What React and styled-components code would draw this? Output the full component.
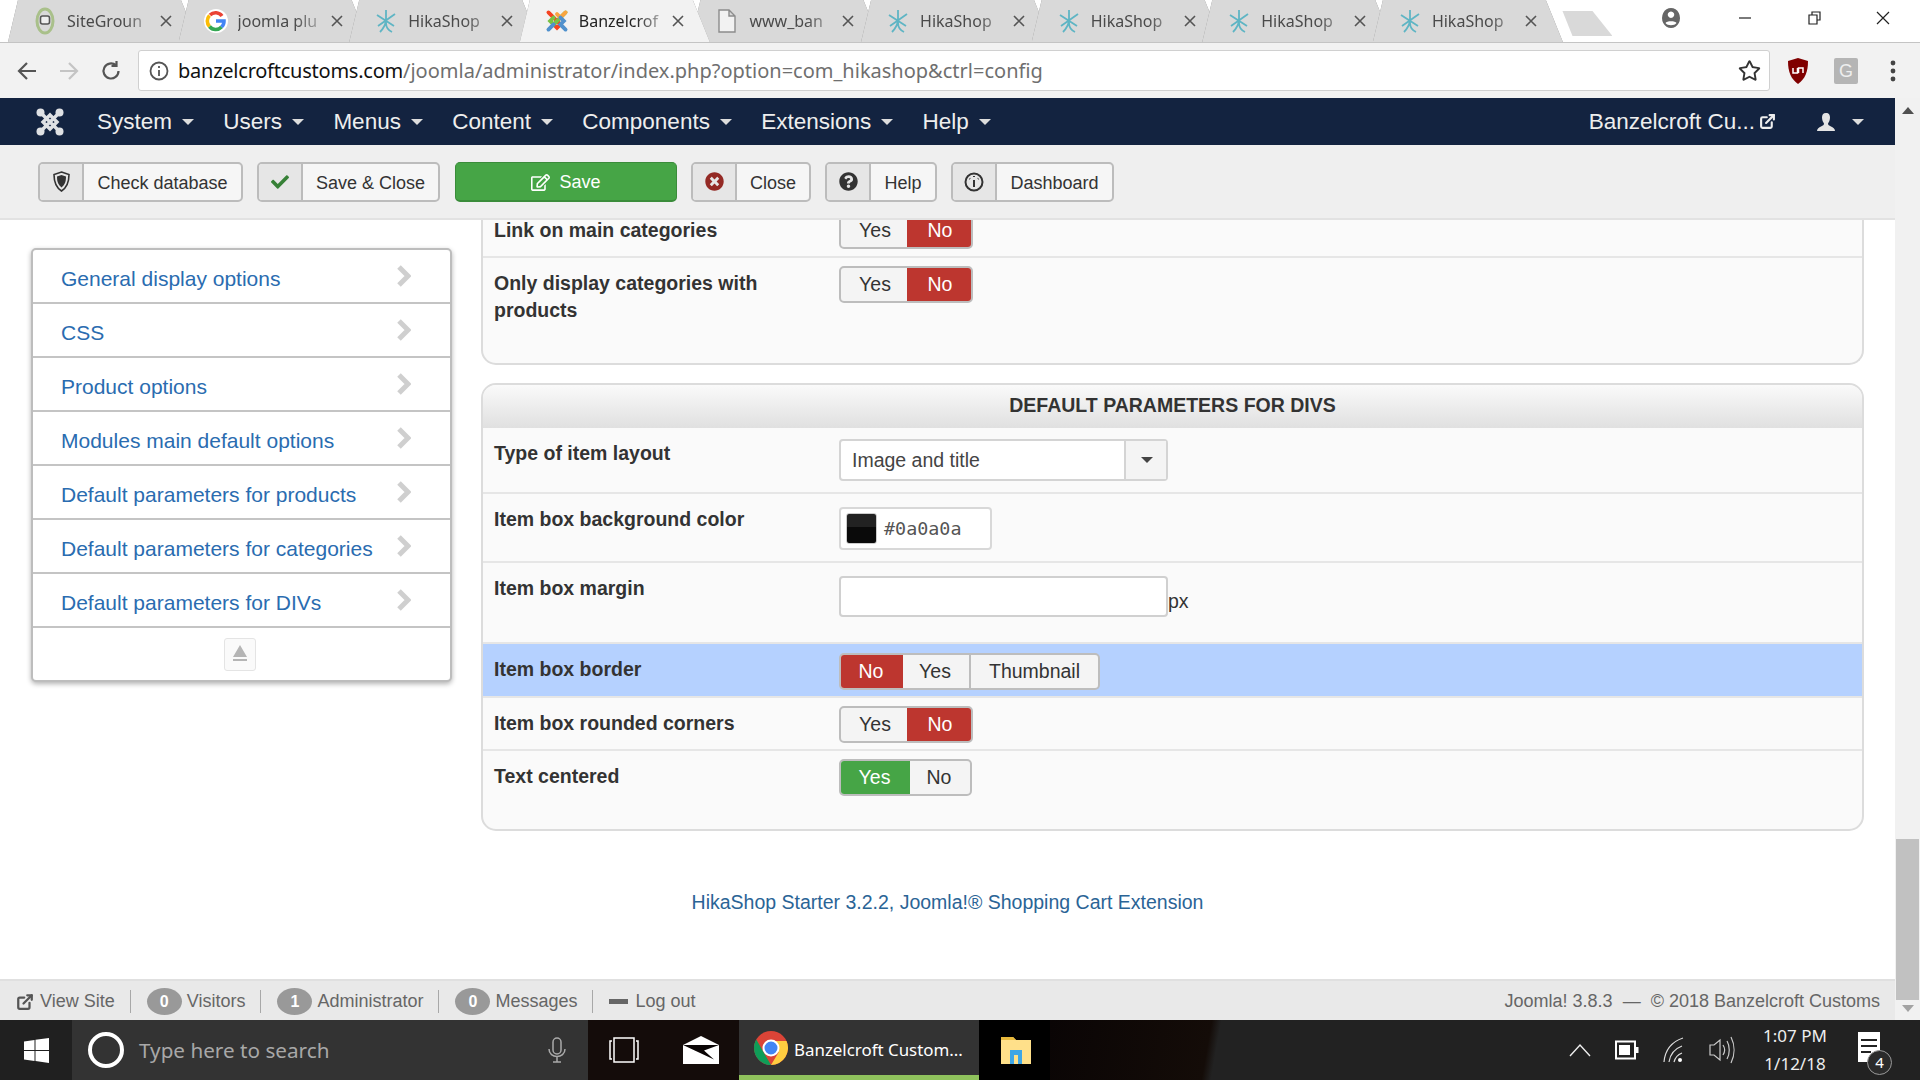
import React from "react";
import styled, { createGlobalStyle } from "styled-components";
import { FaTimesCircle, FaQuestionCircle, FaRegEdit, FaCheck, FaRegStar } from "react-icons/fa";
import { FiExternalLink } from "react-icons/fi";

const GlobalStyle = createGlobalStyle`
    html, body { margin: 0; padding: 0; background: #fff; overflow: hidden; }
    * { box-sizing: border-box; }
    body { font-family: "Liberation Sans", Arial, sans-serif; }
`;

const Screen = styled.div`
    width: 1920px;
    height: 1080px;
    display: flex;
    flex-direction: column;
    overflow: hidden;
`;

/* browser chrome */
const TabStrip = styled.div`
    height: 43px;
    flex: none;
    display: flex;
    align-items: flex-start;
    padding-left: 8px;
    background: #fff;
    border-bottom: 1px solid #c4c4c4;
`;
const TabShell = styled.div`
    width: 190px;
    height: 42px;
    flex: none;
    margin-right: -19.4px;
    position: relative;
    z-index: ${(p) => (p.$active ? 2 : 1)};
    filter: drop-shadow(0 0 0.6px #8a8a8a);
`;
const TabBody = styled.div`
    width: 100%;
    height: 100%;
    display: flex;
    align-items: center;
    padding-left: 25px;
    background: ${(p) => (p.$active ? "#f2f2f2" : "#d9d9d9")};
    clip-path: polygon(0 100%, 10px 0, 173px 0, 100% 100%);
`;
const TabIcon = styled.span`
    width: 24px;
    height: 24px;
    flex: none;
    display: flex;
    align-items: center;
    justify-content: center;
`;
const TabTitle = styled.span`
    width: 81px;
    margin-left: 10px;
    overflow: hidden;
    white-space: nowrap;
    font: 16px "Noto Sans", sans-serif;
    color: ${(p) => (p.$active ? "#222" : "#4a4a4a")};
    -webkit-mask-image: linear-gradient(to right, #000 70%, rgba(0, 0, 0, 0.35) 100%);
    mask-image: linear-gradient(to right, #000 70%, rgba(0, 0, 0, 0.35) 100%);
`;
const TabClose = styled.svg`
    width: 12px;
    height: 12px;
    margin-left: 12px;
    flex: none;
    stroke: #555;
    stroke-width: 1.6;
`;
const NewTab = styled.div`
    width: 50px;
    height: 25px;
    flex: none;
    margin: 11px 0 0 19px;
    background: #d9d9d9;
    clip-path: polygon(0 0, 30px 0, 100% 100%, 10px 100%);
`;
const WindowControls = styled.div`
    flex: 1;
    display: flex;
    align-items: center;
    height: 36px;
    padding-left: 49px;
`;
const WinButton = styled.svg`
    width: 16px;
    height: 16px;
    flex: none;
    margin-left: ${(p) => p.$gap}px;
    stroke: #222;
    fill: none;
    stroke-width: 1.2;
`;

const AddressBar = styled.div`
    height: 55px;
    flex: none;
    display: flex;
    align-items: center;
    background: #f2f2f2;
    padding-left: 16px;
`;
const NavArrow = styled.svg`
    width: 22px;
    height: 22px;
    flex: none;
    margin-right: ${(p) => p.$gap}px;
    fill: none;
    stroke: ${(p) => p.$color};
    stroke-width: 2.2;
`;
const UrlBox = styled.div`
    width: 1632px;
    height: 41px;
    margin-left: -3px;
    background: #fff;
    border: 1px solid #d0d0d0;
    border-radius: 3px;
    display: flex;
    align-items: center;
    padding-left: 10px;
    font: 20px "Noto Sans", sans-serif;
    white-space: nowrap;
`;
const UrlHost = styled.span`
    color: #111;
    margin-left: 9px;
    letter-spacing: -0.24px;
`;
const UrlRest = styled.span`
    color: #6f6f6f;
    flex: 1;
`;
const StarIcon = styled(FaRegStar)`
    width: 23px;
    height: 23px;
    color: #333;
    margin-right: 8px;
`;
const ExtGlyph = styled.div`
    width: 24px;
    height: 30px;
    flex: none;
    margin-left: ${(p) => p.$gap}px;
    display: flex;
    align-items: center;
    justify-content: center;
`;
const GBadge = styled.div`
    width: 24px;
    height: 26px;
    flex: none;
    margin-left: 24px;
    background: #b5b5b5;
    border-radius: 2px;
    color: #eee;
    text-align: center;
    font: 18px/26px "Liberation Sans", sans-serif;
`;

/* page area */
const Viewport = styled.div`
    flex: 1;
    min-height: 0;
    display: flex;
`;
const Page = styled.div`
    width: 1895px;
    display: flex;
    flex-direction: column;
`;
const Scrollbar = styled.div`
    width: 25px;
    display: flex;
    flex-direction: column;
    align-items: center;
    background: #f1f1f1;
    padding-top: 9px;
`;
const ScrollSpacer = styled.div`
    flex: 1;
`;
const ScrollThumb = styled.div`
    width: 23px;
    height: 161px;
    background: #c1c1c1;
    margin-bottom: 5px;
`;
const ScrollArrow = styled.div`
    width: 0;
    height: 0;
    border-left: 6px solid transparent;
    border-right: 6px solid transparent;
    ${(p) => (p.$down ? "border-top: 7px solid #a3a3a3; margin-bottom: 8px;" : "border-bottom: 7px solid #505050;")}
`;

const Navbar = styled.div`
    height: 47px;
    flex: none;
    background: #132340;
    display: flex;
    align-items: center;
    padding-left: 36px;
    color: #eee;
    font-size: 22.5px;
`;
const NavLogo = styled.svg`
    width: 28px;
    height: 28px;
    margin-right: 33px;
    flex: none;
`;
const NavItem = styled.div`
    display: flex;
    align-items: center;
    margin-right: 29.3px;
`;
const Caret = styled.span`
    width: 0;
    height: 0;
    margin-left: ${(p) => p.$gap || 10}px;
    border-left: 6px solid transparent;
    border-right: 6px solid transparent;
    border-top: 6px solid ${(p) => p.$color || "#ddd"};
`;
const NavRight = styled.div`
    margin-left: auto;
    display: flex;
    align-items: center;
    padding-right: 31px;
`;
const UserGlyph = styled.svg`
    width: 18px;
    height: 18px;
    margin-left: 41px;
    fill: #e4e4e4;
`;
const LinkIcon = styled(FiExternalLink)`
    width: 17px;
    height: 17px;
    margin-left: 4px;
    stroke-width: 3;
`;

const Subhead = styled.div`
    height: 75px;
    flex: none;
    display: flex;
    align-items: center;
    gap: 14px;
    padding-left: 38px;
    background: #efefef;
    border-bottom: 2px solid #e2e2e2;
`;
const ToolButton = styled.div`
    height: 40px;
    width: ${(p) => p.$w}px;
    display: flex;
    align-items: stretch;
    background: #f6f6f6;
    border: 2px solid #bcbcbc;
    border-radius: 5px;
    font-size: 18px;
    color: #333;
    overflow: hidden;
`;
const ToolIcon = styled.span`
    width: ${(p) => p.$w}px;
    flex: none;
    display: flex;
    align-items: center;
    justify-content: center;
    background: #e6e6e6;
    border-right: 2px solid #bcbcbc;
`;
const ToolLabel = styled.span`
    flex: 1;
    display: flex;
    align-items: center;
    justify-content: center;
    padding-top: 3px;
`;
const SaveButton = styled.div`
    width: 222px;
    height: 40px;
    margin-left: 1px;
    display: flex;
    align-items: center;
    justify-content: center;
    gap: 9px;
    padding-top: 2px;
    background: #46a546;
    border: 1px solid #3a8c3a;
    border-bottom-width: 2px;
    border-radius: 5px;
    color: #fff;
    font-size: 18px;
`;

const Main = styled.div`
    flex: 1;
    min-height: 0;
    display: flex;
    flex-direction: column;
    background: #fff;
`;
const Columns = styled.div`
    display: flex;
    align-items: flex-start;
    padding-left: 31px;
`;
const SideMenu = styled.div`
    width: 421px;
    margin-top: 28px;
    flex: none;
    background: #fff;
    border: 2px solid #bdbdbd;
    border-radius: 5px;
    box-shadow: 0 2px 5px rgba(0, 0, 0, 0.3);
`;
const SideItem = styled.div`
    height: 54px;
    display: flex;
    align-items: center;
    justify-content: space-between;
    padding: 5px 39px 0 28px;
    border-bottom: 2px solid #c4c4c4;
    color: #2a6cb0;
    font-size: 21px;
`;
const SideChevron = styled.svg`
    width: 14px;
    height: 22px;
    margin-top: -5px;
    fill: none;
    stroke: #cfcfcf;
    stroke-width: 5;
`;
const SideFoot = styled.div`
    height: 52px;
    display: flex;
    align-items: center;
    justify-content: center;
    padding-right: 4px;
`;
const CollapseButton = styled.div`
    width: 32px;
    height: 33px;
    display: flex;
    align-items: center;
    justify-content: center;
    background: #fafafa;
    border: 1px solid #e4e4e4;
    border-radius: 3px;
`;

const Panels = styled.div`
    width: 1383px;
    margin-left: 29px;
    flex: none;
    display: flex;
    flex-direction: column;
    gap: 18px;
`;
const Panel = styled.div`
    background: #fafafa;
    border: 2px solid #dcdcdc;
    border-top-width: ${(p) => (p.$cut ? 0 : 2)}px;
    border-radius: ${(p) => (p.$cut ? "0 0 15px 15px" : "15px")};
    overflow: hidden;
`;
const PanelHead = styled.div`
    height: 43px;
    line-height: 41px;
    text-align: center;
    font-weight: 700;
    font-size: 19.5px;
    color: #333;
    background: linear-gradient(#fafafa, #e0e0e0);
`;
const Row = styled.div`
    height: ${(p) => p.$h}px;
    display: grid;
    grid-template-columns: 345px 1fr;
    padding-left: 11px;
    overflow: hidden;
    background: ${(p) => (p.$hl ? "#b5d1ff" : "transparent")};
    border-bottom: ${(p) => (p.$last ? "none" : "2px solid #e6e6e6")};
`;
const Label = styled.div`
    width: 320px;
    margin-top: ${(p) => (p.$top === undefined ? 12 : p.$top)}px;
    font-weight: 700;
    font-size: 19.5px;
    line-height: 27px;
    color: #333;
`;
const Control = styled.div`
    display: flex;
    align-items: flex-start;
    margin-top: ${(p) => p.$top}px;
`;
const Toggle = styled.div`
    display: flex;
    height: 37px;
    border-radius: 5px;
    overflow: hidden;
    background: #f4f4f4;
    border: 2px solid #bdbdbd;
    font-size: 19.5px;
`;
const ToggleOpt = styled.span`
    width: ${(p) => p.$w}px;
    margin: ${(p) => (p.$on ? "-2px" : 0)} ${(p) => (p.$on ? "-2px" : 0)};
    display: flex;
    align-items: center;
    justify-content: center;
    background: ${(p) => (p.$on === "red" ? "#bd362f" : p.$on === "green" ? "#46a546" : "transparent")};
    color: ${(p) => (p.$on ? "#fff" : "#333")};
    border-right: ${(p) => (p.$sep ? "2px solid #bdbdbd" : "none")};
`;
const SelectBox = styled.div`
    width: 329px;
    height: 42px;
    display: flex;
    background: #fff;
    border: 2px solid #d4d4d4;
    border-radius: 4px;
    font-size: 19.5px;
    color: #444;
`;
const SelectValue = styled.span`
    flex: 1;
    padding-left: 11px;
    line-height: 38px;
`;
const SelectArrow = styled.span`
    width: 42px;
    display: flex;
    align-items: center;
    justify-content: center;
    background: #f4f4f4;
    border-left: 2px solid #d4d4d4;
`;
const ColorField = styled.div`
    width: 153px;
    height: 43px;
    display: flex;
    align-items: center;
    gap: 7px;
    padding-left: 5px;
    background: #fff;
    border: 2px solid #d8d8d8;
    border-radius: 4px;
    font: 18.4px "DejaVu Sans Mono", monospace;
    color: #555;
`;
const Swatch = styled.span`
    width: 31px;
    height: 31px;
    border-radius: 3px;
    border: 1px solid #ccc;
    background: linear-gradient(#222 0 45%, #0a0a0a 45%);
`;
const TextInput = styled.div`
    width: 329px;
    height: 41px;
    background: #fff;
    border: 2px solid #d0d0d0;
    border-radius: 4px;
`;
const Unit = styled.span`
    font-size: 19.5px;
    color: #333;
    margin-top: 14px;
`;
const FooterLink = styled.div`
    margin-top: 60px;
    text-align: center;
    font-size: 19.5px;
    color: #2a6496;
`;

const StatusBar = styled.div`
    height: 41px;
    flex: none;
    display: flex;
    align-items: center;
    padding: 2px 15px 0 16px;
    background: #e9e9e9;
    border-top: 2px solid #e0e0e0;
    color: #666;
    font-size: 18px;
`;
const StatusSep = styled.span`
    width: 1px;
    height: 23px;
    margin: 0 16px 0 15px;
    background: #a8a8a8;
`;
const Badge = styled.span`
    width: 35px;
    height: 27px;
    margin-right: 5px;
    border-radius: 50%;
    background: #999;
    color: #fff;
    font-weight: 700;
    font-size: 16px;
    display: flex;
    align-items: center;
    justify-content: center;
`;
const StatusLink = styled(FiExternalLink)`
    width: 18px;
    height: 18px;
    margin-right: 6px;
    color: #555;
    stroke-width: 3;
`;
const LogoutDash = styled.span`
    width: 19px;
    height: 5px;
    margin-right: 7px;
    background: #666;
`;
const StatusRight = styled.span`
    margin-left: auto;
    margin-top: -1px;
`;

/* windows taskbar */
const Taskbar = styled.div`
    height: 60px;
    flex: none;
    display: flex;
    background: #222;
    color: #fff;
    font-family: "Noto Sans", sans-serif;
`;
const StartCell = styled.div`
    width: 72px;
    display: flex;
    align-items: center;
    justify-content: center;
    background: #202020;
`;
const SearchCell = styled.div`
    width: 516px;
    display: flex;
    align-items: center;
    padding-left: 14px;
    background: #333;
    font-size: 20.7px;
    color: #a8a8a8;
`;
const SearchText = styled.span`
    flex: 1;
    margin-left: 13px;
`;
const TaskIcons = styled.div`
    width: 151px;
    display: flex;
    align-items: center;
    gap: 44px;
    padding-left: 21px;
    background: #140c0a;
`;
const ChromeCell = styled.div`
    width: 240px;
    display: flex;
    align-items: center;
    gap: 6px;
    padding-left: 15px;
    background: #333;
    border-bottom: 5px solid #8fc25c;
    font-size: 16.9px;
    white-space: nowrap;
`;
const ChromeLabel = styled.span`
    margin-top: 3px;
`;
const FolderCell = styled.div`
    width: 71px;
    display: flex;
    align-items: center;
    padding-left: 21px;
    background: #000;
`;
const Wallpaper = styled.div`
    width: 180px;
    background: linear-gradient(100deg, #0a0505 0%, #140c08 85%, #222 90%);
`;
const Tray = styled.div`
    flex: 1;
    display: flex;
    align-items: center;
    padding-left: 339px;
    gap: 24px;
`;
const Clock = styled.div`
    width: 72px;
    white-space: nowrap;
    font-size: 17px;
    line-height: 28px;
    text-align: center;
    color: #eee;
`;
const NotifyWrap = styled.div`
    position: relative;
    width: 22px;
    height: 30px;
    margin-left: 3px;
    margin-top: -6px;
`;
const NotifyBadge = styled.span`
    position: absolute;
    right: -12px;
    bottom: -13px;
    width: 25px;
    height: 25px;
    border-radius: 50%;
    background: #2b2b2b;
    border: 1px solid #999;
    font-size: 15px;
    text-align: center;
    line-height: 23px;
`;

/* little drawings */
const HikaIcon = () => (
    <svg width="22" height="24" viewBox="0 0 22 24" fill="none" stroke="#5fb5c4" strokeWidth="1.8">
        <path d="M11 1v13c0 4 2 7 6 9M2 6l17 11M20 5L3 17M11 12c-1 5-3 8-6 11" />
    </svg>
);
const GoogleIcon = () => (
    <svg width="24" height="24" viewBox="0 0 24 24" fill="none" strokeWidth="3.6">
        <circle cx="12" cy="12" r="12" fill="#fff" />
        <path d="M18 7a8 8 0 0 0-12-1" stroke="#ea4335" />
        <path d="M5.5 6.5a8 8 0 0 0 0 11" stroke="#fbbc05" />
        <path d="M5.5 17.5a8 8 0 0 0 12 .5" stroke="#34a853" />
        <path d="M17.5 18a8 8 0 0 0 2.5-6h-8" stroke="#4285f4" />
    </svg>
);
const SiteIcon = () => (
    <svg width="20" height="28" viewBox="0 0 20 28" fill="none">
        <ellipse cx="10" cy="14" rx="8" ry="12" stroke="#a9c08a" strokeWidth="3" />
        <rect x="5.5" y="9" width="9" height="8" rx="2" fill="#eee" stroke="#555" strokeWidth="1.6" />
    </svg>
);
const JoomlaColorIcon = () => (
    <svg width="26" height="26" viewBox="0 0 28 28" fill="none" strokeWidth="4.5" strokeLinecap="round">
        <path d="M4 4L18 18l-4 4-4-4" stroke="#f44321" />
        <path d="M24 4L10 18l-4-4 4-4" stroke="#7ac143" />
        <path d="M4 24l6-6" stroke="#5091cd" />
        <path d="M14 6l4 4 6-6" stroke="#f9a541" />
        <path d="M24 24l-6-6 4-4-4-4" stroke="#5091cd" />
    </svg>
);
const JoomlaLogo = () => (
    <NavLogo viewBox="0 0 28 28" fill="none" stroke="#dfe1e4" strokeWidth="3.4" strokeLinecap="round">
        <path d="M5 5l18 18M23 5L5 23M14 7l7 7-7 7-7-7z" />
        <g fill="#dfe1e4" stroke="none">
            <circle cx="4.5" cy="4.5" r="4" /><circle cx="23.5" cy="4.5" r="4" />
            <circle cx="4.5" cy="23.500" r="4" /><circle cx="23.500" cy="23.500" r="4" />
        </g>
    </NavLogo>
);
const FileIcon = () => (
    <svg width="18" height="24" viewBox="0 0 18 24" fill="#f2f2f2" stroke="#8c8c8c" strokeWidth="1.4">
        <path d="M1 1h10l6 6v16H1zM11 1v6h6" />
    </svg>
);
const ShieldIcon = () => (
    <svg width="17" height="21" viewBox="0 0 17 21">
        <path d="M8.5 1L16 3.5c0 8-2 13-7.5 16.500C3 16.500 1 11.500 1 3.500z" fill="none" stroke="#333" strokeWidth="1.600" />
        <path d="M8.500 4l4.500 1.500c0 5-1 8-4.500 11-3.500-3-4.500-6-4.500-11z" fill="#333" />
    </svg>
);
const DashIcon = () => (
    <svg width="20" height="22" viewBox="0 0 20 22" fill="none" stroke="#333" strokeWidth="2">
        <circle cx="10" cy="11" r="8.500" />
        <path d="M10 9v7M5.500 7.500l.5.500M14.500 7.500l-.5.500M10 5v1" />
    </svg>
);

const tabs = [
    { title: "SiteGroun", icon: <SiteIcon /> },
    { title: "joomla plu", icon: <GoogleIcon /> },
    { title: "HikaShop", icon: <HikaIcon /> },
    { title: "Banzelcrof", icon: <JoomlaColorIcon />, active: true },
    { title: "www_ban", icon: <FileIcon /> },
    { title: "HikaShop", icon: <HikaIcon /> },
    { title: "HikaShop", icon: <HikaIcon /> },
    { title: "HikaShop", icon: <HikaIcon /> },
    { title: "HikaShop", icon: <HikaIcon /> },
];
const menus = ["System", "Users", "Menus", "Content", "Components", "Extensions", "Help"];
const sideItems = [
    "General display options",
    "CSS",
    "Product options",
    "Modules main default options",
    "Default parameters for products",
    "Default parameters for categories",
    "Default parameters for DIVs",
];

function YesNo({ value }) {
    return (
        <Toggle>
            <ToggleOpt $w={value === "yes" ? 71 : 68} $on={value === "yes" ? "green" : undefined}>Yes</ToggleOpt>
            <ToggleOpt $w={value === "no" ? 66 : 62} $on={value === "no" ? "red" : undefined}>No</ToggleOpt>
        </Toggle>
    );
}

export default function App() {
    return (
        <Screen>
            <GlobalStyle />
            <TabStrip>
                {tabs.map((tab, i) => (
                    <TabShell key={i} $active={tab.active}>
                        <TabBody $active={tab.active}>
                            <TabIcon>{tab.icon}</TabIcon>
                            <TabTitle $active={tab.active}>{tab.title}</TabTitle>
                            <TabClose viewBox="0 0 12 12"><path d="M1 1l10 10M11 1L1 11" /></TabClose>
                        </TabBody>
                    </TabShell>
                ))}
                <NewTab />
                <WindowControls>
                    <svg width="20" height="22" viewBox="0 0 20 22" fill="#666">
                        <path d="M10 1a9 10 0 1 0 .01 0zM10 4.500a3.200 3.200 0 1 1-.01 0zM4.500 16c1-2.500 10-2.500 11 0-2 3-9 3-11 0z" fillRule="evenodd" />
                    </svg>
                    <WinButton $gap={56} viewBox="0 0 16 16"><path d="M2 8h12" /></WinButton>
                    <WinButton $gap={53} viewBox="0 0 16 16"><path d="M3 5h8v9H3zM6 5V2h8v8h-3" /></WinButton>
                    <WinButton $gap={53} viewBox="0 0 16 16"><path d="M2 2l12 12M14 2L2 14" /></WinButton>
                </WindowControls>
            </TabStrip>

            <AddressBar>
                <NavArrow $gap={20} $color="#555" viewBox="0 0 22 22"><path d="M20 11H3M11 3l-8 8 8 8" /></NavArrow>
                <NavArrow $gap={20} $color="#c4c4c4" viewBox="0 0 22 22"><path d="M2 11h17M11 3l8 8-8 8" /></NavArrow>
                <NavArrow $gap={19} $color="#555" viewBox="0 0 22 22"><path d="M18.500 11a7.500 7.500 0 1 1-2.500-5.600M16.500 1v5h-5" /></NavArrow>
                <UrlBox>
                    <svg width="20" height="20" viewBox="0 0 20 20" fill="none" stroke="#555" strokeWidth="1.800">
                        <circle cx="10" cy="10" r="8.500" />
                        <path d="M10 9v6M10 5v2" />
                    </svg>
                    <UrlHost>banzelcroftcustoms.com</UrlHost>
                    <UrlRest>/joomla/administrator/index.php?option=com_hikashop&amp;ctrl=config</UrlRest>
                    <StarIcon />
                </UrlBox>
                <ExtGlyph $gap={16}>
                    <svg width="22" height="28" viewBox="0 0 22 28">
                        <path d="M11 1l10 3c0 11-3 18-10 23C4 22 1 15 1 4z" fill="#800000" />
                        <path d="M6 11v5h4.500v-5M11.500 16v-5H16v5" fill="none" stroke="#fff" strokeWidth="1.500" />
                    </svg>
                </ExtGlyph>
                <GBadge>G</GBadge>
                <ExtGlyph $gap={23}>
                    <svg width="6" height="24" viewBox="0 0 6 24" fill="#444">
                        <circle cx="3" cy="4" r="2.400" /><circle cx="3" cy="12" r="2.400" /><circle cx="3" cy="20" r="2.400" />
                    </svg>
                </ExtGlyph>
            </AddressBar>

            <Viewport>
                <Page>
                    <Navbar>
                        <JoomlaLogo />
                        {menus.map((m) => (
                            <NavItem key={m}>{m}<Caret /></NavItem>
                        ))}
                        <NavRight>
                            Banzelcroft Cu...
                            <LinkIcon />
                            <UserGlyph viewBox="0 0 18 18">
                                <path d="M9 0c3 0 4 2 4 4.500S12 9 11 10.500c0 1.500 1 2 3 3s4 2 4 4.500H0c0-2.500 2-3.500 4-4.500s3-1.500 3-3C6 9 5 7 5 4.500S6 0 9 0z" />
                            </UserGlyph>
                            <Caret $gap={17} />
                        </NavRight>
                    </Navbar>

                    <Subhead>
                        <ToolButton $w={205}>
                            <ToolIcon $w={44}><ShieldIcon /></ToolIcon>
                            <ToolLabel>Check database</ToolLabel>
                        </ToolButton>
                        <ToolButton $w={183}>
                            <ToolIcon $w={44}><FaCheck color="#378137" size={18} /></ToolIcon>
                            <ToolLabel>Save &amp; Close</ToolLabel>
                        </ToolButton>
                        <SaveButton><FaRegEdit size={19} />Save</SaveButton>
                        <ToolButton $w={120}>
                            <ToolIcon $w={44}><FaTimesCircle color="#942a25" size={19} /></ToolIcon>
                            <ToolLabel>Close</ToolLabel>
                        </ToolButton>
                        <ToolButton $w={112}>
                            <ToolIcon $w={44}><FaQuestionCircle color="#333" size={19} /></ToolIcon>
                            <ToolLabel>Help</ToolLabel>
                        </ToolButton>
                        <ToolButton $w={163}>
                            <ToolIcon $w={44}><DashIcon /></ToolIcon>
                            <ToolLabel>Dashboard</ToolLabel>
                        </ToolButton>
                    </Subhead>

                    <Main>
                        <Columns>
                            <SideMenu>
                                {sideItems.map((item) => (
                                    <SideItem key={item}>
                                        {item}
                                        <SideChevron viewBox="0 0 14 22"><path d="M2 2l9 9-9 9" /></SideChevron>
                                    </SideItem>
                                ))}
                                <SideFoot>
                                    <CollapseButton>
                                        <svg width="16" height="20" viewBox="0 0 16 20" fill="#b5b5b5">
                                            <path d="M8 1l7 12H1zM1 15h14v2H1z" />
                                        </svg>
                                    </CollapseButton>
                                </SideFoot>
                            </SideMenu>
                            <Panels>
                                <Panel $cut>
                                    <Row $h={38}>
                                        <Label $top={-3}>Link on main categories</Label>
                                        <Control $top={-8}><YesNo value="no" /></Control>
                                    </Row>
                                    <Row $h={105} $last>
                                        <Label>Only display categories with products</Label>
                                        <Control $top={8}><YesNo value="no" /></Control>
                                    </Row>
                                </Panel>
                                <Panel>
                                    <PanelHead>DEFAULT PARAMETERS FOR DIVS</PanelHead>
                                    <Row $h={66}>
                                        <Label>Type of item layout</Label>
                                        <Control $top={11}>
                                            <SelectBox>
                                                <SelectValue>Image and title</SelectValue>
                                                <SelectArrow><Caret $gap={1} $color="#444" /></SelectArrow>
                                            </SelectBox>
                                        </Control>
                                    </Row>
                                    <Row $h={69}>
                                        <Label>Item box background color</Label>
                                        <Control $top={13}>
                                            <ColorField><Swatch />#0a0a0a</ColorField>
                                        </Control>
                                    </Row>
                                    <Row $h={81}>
                                        <Label>Item box margin</Label>
                                        <Control $top={13}>
                                            <TextInput />
                                            <Unit>px</Unit>
                                        </Control>
                                    </Row>
                                    <Row $h={54} $hl>
                                        <Label>Item box border</Label>
                                        <Control $top={9}>
                                            <Toggle>
                                                <ToggleOpt $w={64} $on="red">No</ToggleOpt>
                                                <ToggleOpt $w={70} $sep>Yes</ToggleOpt>
                                                <ToggleOpt $w={127}>Thumbnail</ToggleOpt>
                                            </Toggle>
                                        </Control>
                                    </Row>
                                    <Row $h={53}>
                                        <Label>Item box rounded corners</Label>
                                        <Control $top={8}><YesNo value="no" /></Control>
                                    </Row>
                                    <Row $h={78} $last>
                                        <Label>Text centered</Label>
                                        <Control $top={8}><YesNo value="yes" /></Control>
                                    </Row>
                                </Panel>
                            </Panels>
                        </Columns>
                        <FooterLink>HikaShop Starter 3.2.2, Joomla!® Shopping Cart Extension</FooterLink>
                    </Main>

                    <StatusBar>
                        <StatusLink />
                        View Site
                        <StatusSep />
                        <Badge>0</Badge>Visitors
                        <StatusSep />
                        <Badge>1</Badge>Administrator
                        <StatusSep />
                        <Badge>0</Badge>Messages
                        <StatusSep />
                        <LogoutDash />Log out
                        <StatusRight>Joomla! 3.8.3 &nbsp;—&nbsp; © 2018 Banzelcroft Customs</StatusRight>
                    </StatusBar>
                </Page>
                <Scrollbar>
                    <ScrollArrow />
                    <ScrollSpacer />
                    <ScrollThumb />
                    <ScrollArrow $down />
                </Scrollbar>
            </Viewport>

            <Taskbar>
                <StartCell>
                    <svg width="25" height="25" viewBox="0 0 25 25" fill="#fff">
                        <path d="M0 3.500l10.500-1.500v10H0zM11.500 1.800L25 0v12H11.500zM0 13h10.500v10L0 21.500zM11.500 13H25v12l-13.500-2z" />
                    </svg>
                </StartCell>
                <SearchCell>
                    <svg width="40" height="40" viewBox="0 0 40 40" fill="none" stroke="#fff" strokeWidth="4">
                        <circle cx="20" cy="20" r="16" />
                    </svg>
                    <SearchText>Type here to search</SearchText>
                    <svg width="18" height="26" viewBox="0 0 18 26" fill="none" stroke="#aaa" strokeWidth="1.500" style={{ marginRight: 22 }}>
                        <rect x="5" y="1" width="8" height="16" rx="4" />
                        <path d="M1 12c0 10 16 10 16 0M9 20v5M5 25h8" />
                    </svg>
                </SearchCell>
                <TaskIcons>
                    <svg width="30" height="26" viewBox="0 0 30 26" fill="none" stroke="#fff" strokeWidth="1.500">
                        <rect x="5" y="1" width="20" height="24" />
                        <path d="M3 4H1v18h2M27 4h2v18h-2" />
                    </svg>
                    <svg width="36" height="30" viewBox="0 0 36 30">
                        <path d="M0 10L18 1l18 9v19H0z" fill="#fff" />
                        <path d="M0 10h36L21 15.500l10 9z" fill="#0a0505" />
                    </svg>
                </TaskIcons>
                <ChromeCell>
                    <svg width="34" height="34" viewBox="0 0 34 34">
                        <circle cx="17" cy="17" r="17" fill="#db4437" />
                        <path d="M2.300 8.500L10 22l7 12C7.600 34 0 26.400 0 17c0-3 .8-6 2.300-8.500z" fill="#0f9d58" />
                        <path d="M17 10h15.500A17 17 0 0 1 17 34l7.500-12.500z" fill="#ffcd40" />
                        <circle cx="17" cy="17" r="7.500" fill="#4285f4" stroke="#fff" strokeWidth="2" />
                    </svg>
                    <ChromeLabel>Banzelcroft Custom...</ChromeLabel>
                </ChromeCell>
                <FolderCell>
                    <svg width="32" height="30" viewBox="0 0 32 30">
                        <path d="M1 2h12l3 3h15v24H1z" fill="#ffe08a" />
                        <path d="M1 2h12l3 3H1z" fill="#e8b93c" />
                        <path d="M10 29V15h12v14h-4v-9h-4v9z" fill="#3ea6e6" />
                    </svg>
                </FolderCell>
                <Wallpaper />
                <Tray>
                    <svg width="22" height="14" viewBox="0 0 22 14" fill="none" stroke="#eee" strokeWidth="1.400">
                        <path d="M1 13L11 2l10 11" />
                    </svg>
                    <svg width="24" height="20" viewBox="0 0 24 20">
                        <rect x="1" y="1.500" width="19" height="17" fill="none" stroke="#fff" strokeWidth="2" />
                        <rect x="4" y="5" width="11" height="10" fill="#fff" />
                        <rect x="21" y="7" width="2.500" height="6" fill="#fff" />
                    </svg>
                    <svg width="22" height="26" viewBox="0 0 22 26" fill="none" stroke="#ddd" strokeWidth="1.200">
                        <path d="M1 25C2 14 8 5 20 1M6 25c1-7 5-13 13-16M11 25c1-4 3-7 8-9" />
                        <circle cx="17" cy="23" r="2" fill="#fff" stroke="none" />
                    </svg>
                    <svg width="26" height="34" viewBox="0 0 26 34" fill="none" stroke="#ccc" strokeWidth="1.200">
                        <path d="M1 12h4l6-5v20l-6-5H1zM14 12c2 3 2 7 0 10M18 8c3 5 3 13 0 18M22 4c4 8 4 18 0 26" />
                    </svg>
                    <Clock>1:07 PM<br />1/12/18</Clock>
                    <NotifyWrap>
                        <svg width="22" height="30" viewBox="0 0 22 30">
                            <rect width="22" height="30" fill="#fff" />
                            <path d="M3 8h16M3 14h16M3 20h10" stroke="#222" strokeWidth="2" />
                        </svg>
                        <NotifyBadge>4</NotifyBadge>
                    </NotifyWrap>
                </Tray>
            </Taskbar>
        </Screen>
    );
}
